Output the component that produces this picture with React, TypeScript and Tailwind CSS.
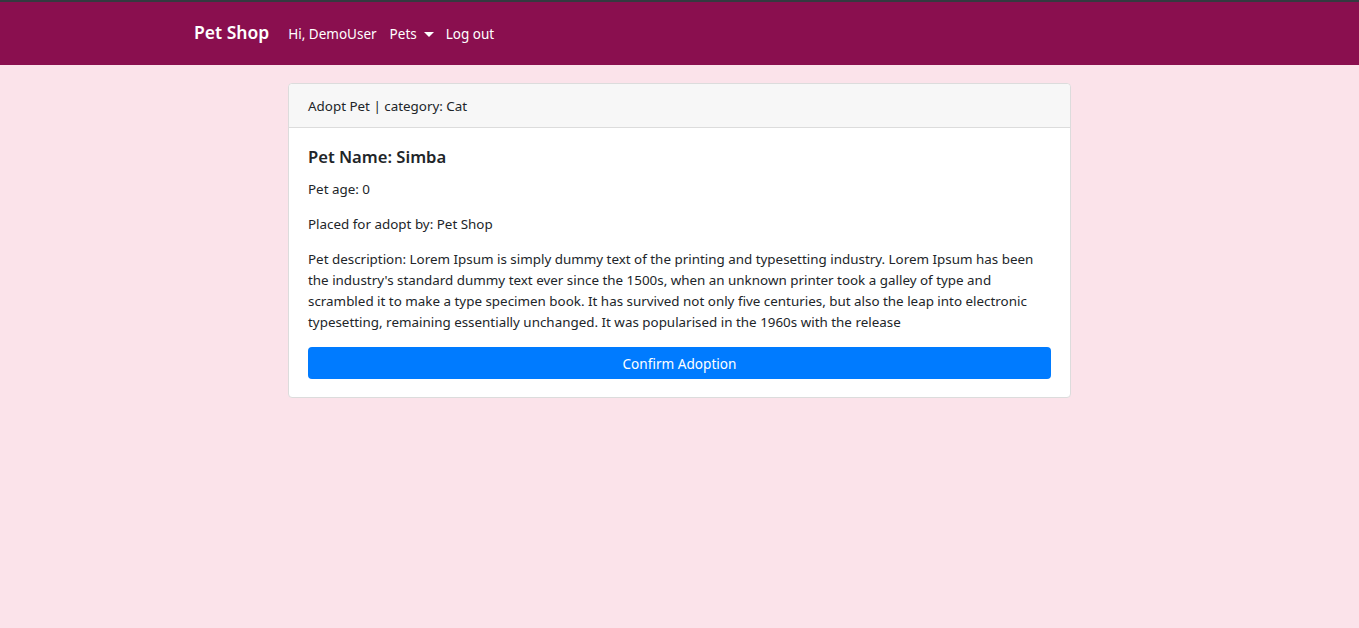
import { useState } from "react";

const description =
  "Lorem Ipsum is simply dummy text of the printing and typesetting industry. Lorem Ipsum has been the industry's standard dummy text ever since the 1500s, when an unknown printer took a galley of type and scrambled it to make a type specimen book. It has survived not only five centuries, but also the leap into electronic typesetting, remaining essentially unchanged. It was popularised in the 1960s with the release";

function Navbar() {
  const [menuOpen, setMenuOpen] = useState(false);

  return (
    <nav className="w-full h-[65px] bg-[#8a0f4f] border-t-2 border-[#343a40]">
      <div className="h-full flex items-center pl-[194px] text-white">
        <a href="#" className="text-[17.5px] font-semibold mr-[19px] -mt-[3px]">
          Pet Shop
        </a>
        <a href="#" className="text-[13.5px] mr-[13px] mt-[1px]">
          Hi, DemoUser
        </a>
        <button
          className="flex items-center gap-[7px] text-[13.5px] mr-[12px] mt-[1px]"
          onClick={() => setMenuOpen(!menuOpen)}
        >
          Pets
          <span className="w-0 h-0 border-x-[5px] border-x-transparent border-t-[5px] border-t-white" />
        </button>
        <a href="#" className="text-[13.5px] mt-[1px]">
          Log out
        </a>
      </div>
    </nav>
  );
}

export default function App() {
  return (
    <div className="w-full min-h-screen bg-[#fbe3ea] text-[#212529] font-['Noto_Sans',sans-serif] text-[13.4px] leading-[21px]">
      <Navbar />
      <div className="pt-[18px]">
        <div className="w-[783px] mx-auto bg-white border border-[#dcdcdc] rounded-[4px]">
          <div className="bg-[#f7f7f7] border-b border-[#dcdcdc] rounded-t-[4px] px-[19px] pt-[12px] pb-[10px]">
            Adopt Pet | category: Cat
          </div>
          <div className="px-[19px] pt-[18px] pb-[18px]">
            <h5 className="text-[16.6px] font-semibold leading-[21px] mb-[12px]">
              Pet Name: Simba
            </h5>
            <p className="mb-[14px]">Pet age: 0</p>
            <p className="mb-[14px]">Placed for adopt by: Pet Shop</p>
            <p className="mb-[14px]">Pet description: {description}</p>
            <button className="w-full h-[32px] bg-[#007bff] text-white rounded-[4px] text-[13.6px]">
              Confirm Adoption
            </button>
          </div>
        </div>
      </div>
    </div>
  );
}
